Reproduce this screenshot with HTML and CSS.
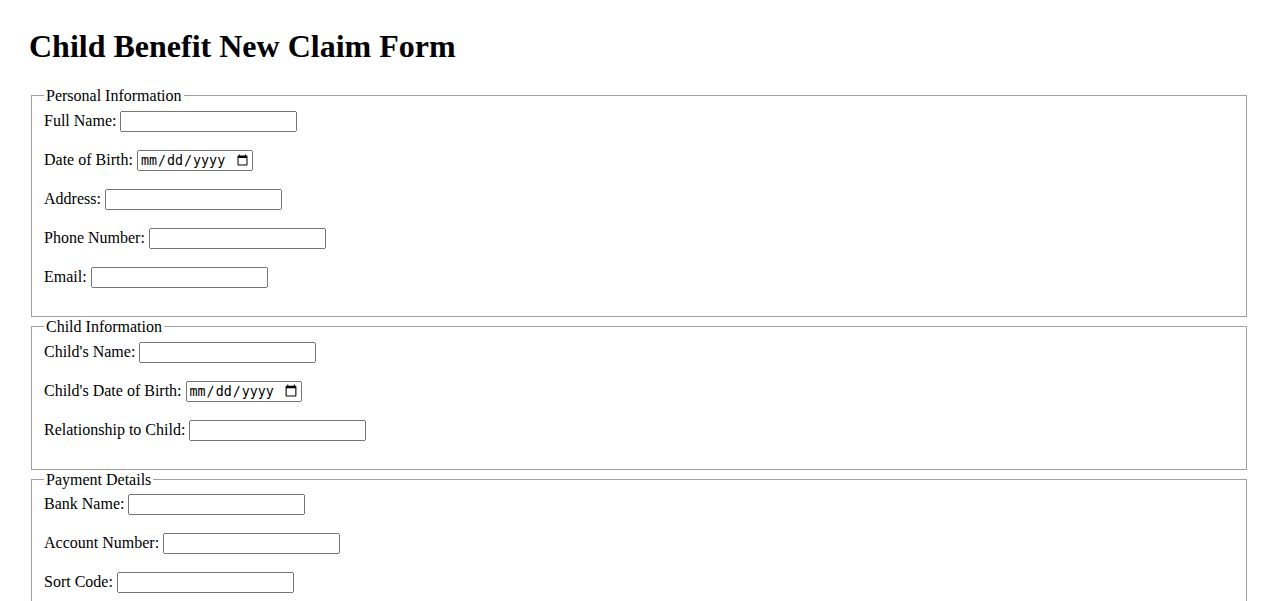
FILE: index.html
```html
<!DOCTYPE html>
<html lang="en">
<head>
<meta charset="utf-8">
<title>Child Benefit New Claim Form</title>
<link rel="stylesheet" href="styles.css">
</head>
<body>
<h1 class="title">Child Benefit New Claim Form</h1>
<form class="claim-form">
<fieldset class="section">
<legend class="section-title">Personal Information</legend>
<label for="fullname">Full Name:</label> <input class="field" type="text" id="fullname"><br><br>
<label for="dob">Date of Birth:</label> <input class="field-date" type="date" id="dob"><br><br>
<label for="address">Address:</label> <input class="field" type="text" id="address"><br><br>
<label for="phone">Phone Number:</label> <input class="field" type="text" id="phone"><br><br>
<label for="email">Email:</label> <input class="field" type="text" id="email"><br><br>
</fieldset>
<fieldset class="section">
<legend class="section-title">Child Information</legend>
<label for="childname">Child's Name:</label> <input class="field" type="text" id="childname"><br><br>
<label for="childdob">Child's Date of Birth:</label> <input class="field-date" type="date" id="childdob"><br><br>
<label for="relationship">Relationship to Child:</label> <input class="field" type="text" id="relationship"><br><br>
</fieldset>
<fieldset class="section">
<legend class="section-title">Payment Details</legend>
<label for="bank">Bank Name:</label> <input class="field" type="text" id="bank"><br><br>
<label for="account">Account Number:</label> <input class="field" type="text" id="account"><br><br>
<label for="sort">Sort Code:</label> <input class="field" type="text" id="sort"><br><br>
</fieldset>
<input type="submit" value="Submit Claim">
</form>
</body>
</html>
```
FILE: styles.css
```css
body {
  margin: 0;
  padding: 28px 29px;
  font-family: "Liberation Serif", "Times New Roman", serif;
  font-size: 16px;
  color: #000;
  background: #fff;
}
.title {
  font-size: 32px;
  font-weight: bold;
  margin: 0 0 21.44px;
}
.claim-form {
  margin: 0;
}
.section {
  margin: 0 2px;
  border: 1px solid #a0a0a0;
}
.section-title {
  line-height: 19px;
  padding: 0 2px;
}
.field {
  box-sizing: border-box;
  width: 177px;
  height: 21px;
}
.field-date {
  box-sizing: border-box;
  width: 116px;
  height: 21px;
}
```
